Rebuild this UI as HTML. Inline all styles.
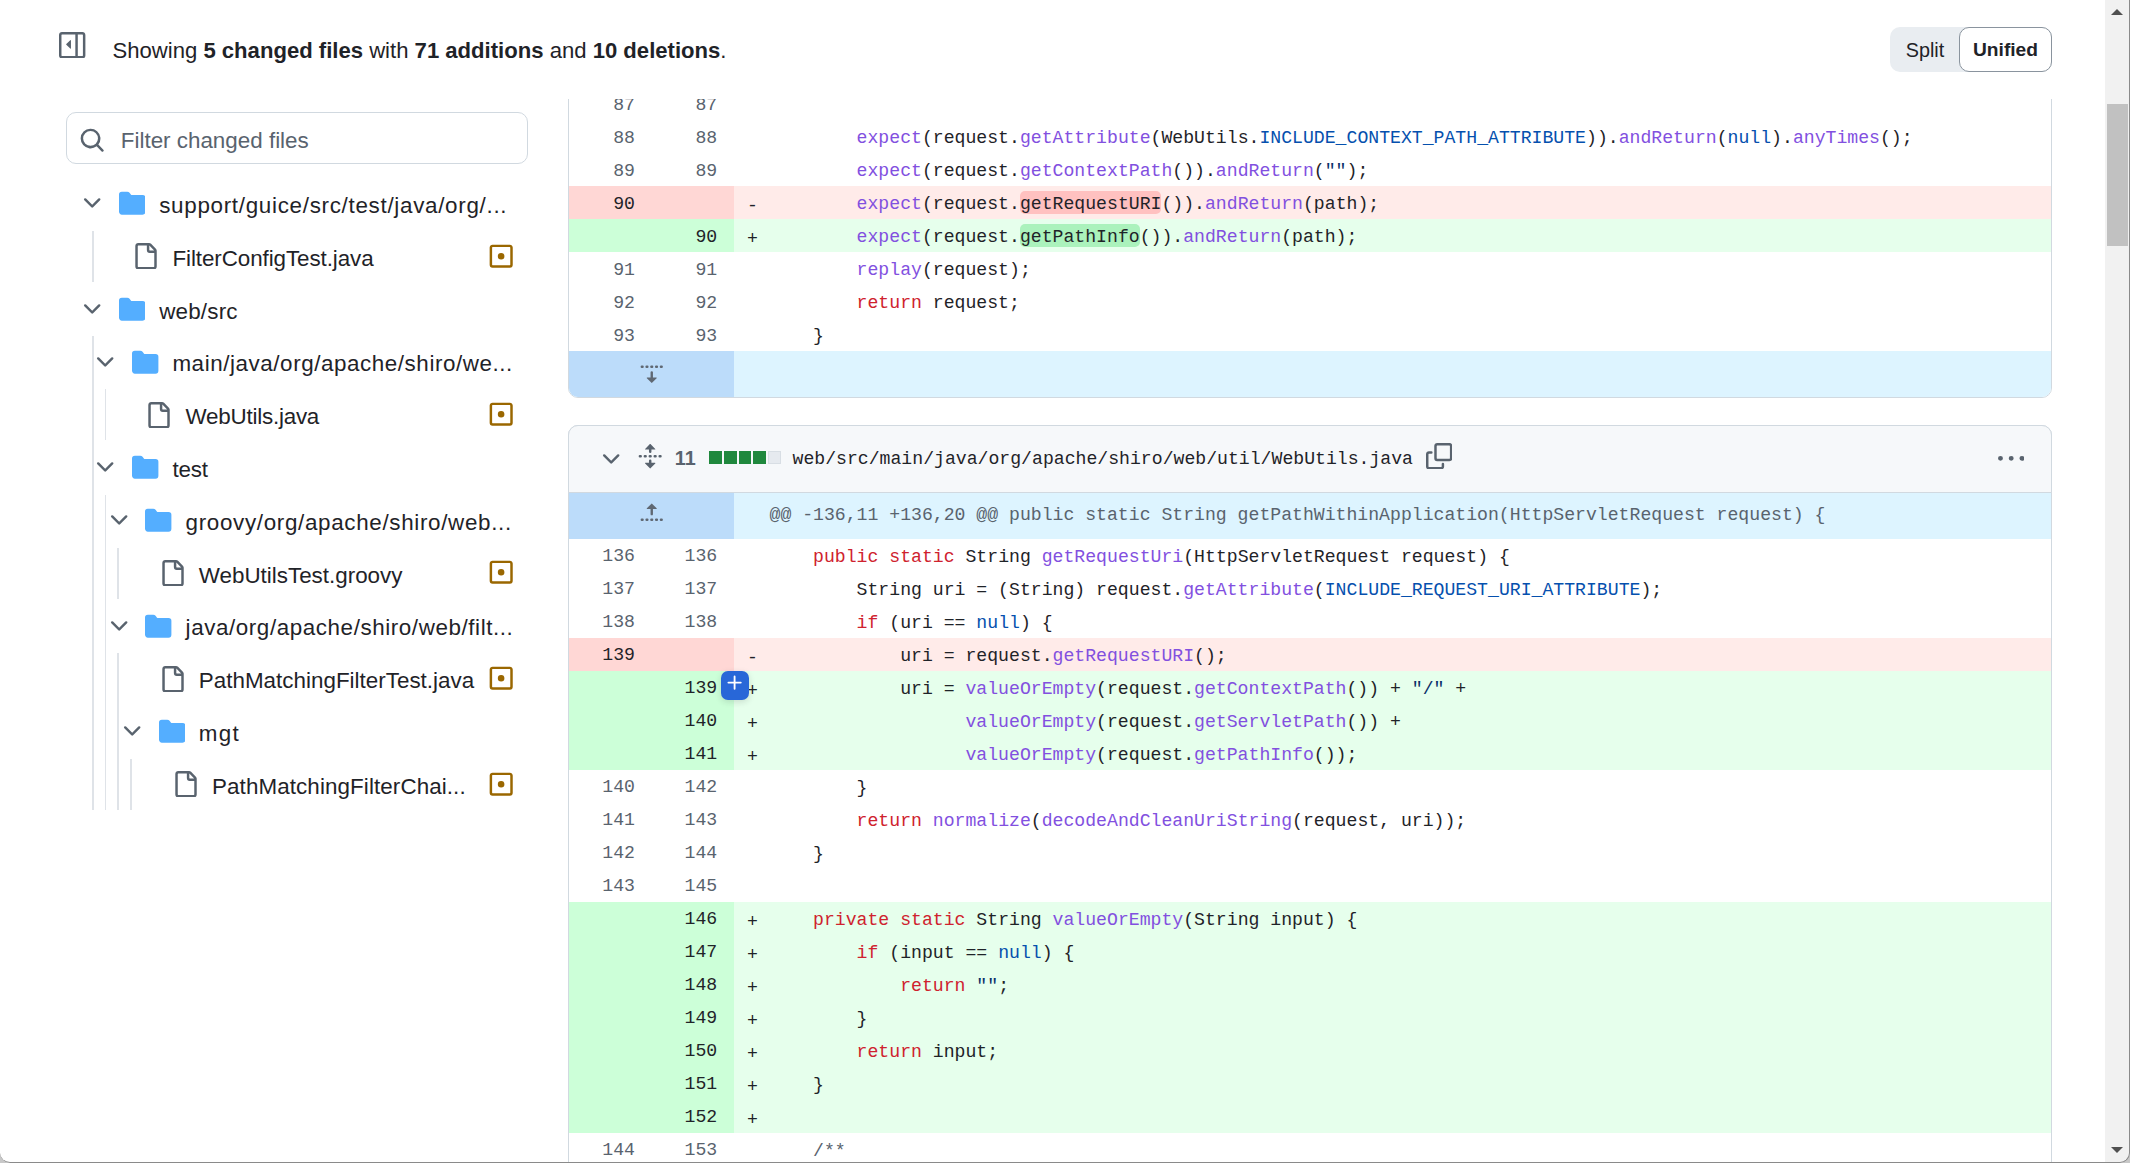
<!DOCTYPE html>
<html><head><meta charset="utf-8"><title>diff</title><style>
*{box-sizing:border-box;margin:0;padding:0}
html,body{width:2130px;height:1163px;overflow:hidden;background:#fff}
body{position:relative;font-family:"Liberation Sans", sans-serif;color:#1f2328}
.hdr{position:absolute;left:112.5px;top:35.4px;font-size:22.1px;line-height:32px;white-space:nowrap;color:#1f2328}
.hdr b{font-weight:700}
.tog{position:absolute;left:1890px;top:27px;width:162px;height:45px;background:#e9edf1;border-radius:10px}
.tog .sp{position:absolute;left:0;top:0;width:69px;height:45px;text-align:center;line-height:47px;font-size:19.8px;color:#1f2328;padding-left:1px}
.tog .un{position:absolute;left:69px;top:0;width:93px;height:45px;background:#fff;border:1.5px solid #8a949e;border-radius:10px;text-align:center;line-height:43.5px;font-size:19.2px;font-weight:700;color:#1f2328}
.search{position:absolute;left:66.3px;top:112.4px;width:461.3px;height:51.8px;border:1.5px solid #d1d9e0;border-radius:10px}
.ph{position:absolute;left:120.8px;top:124.5px;font-size:22.4px;line-height:32px;color:#59636e;white-space:nowrap}
.ti{position:absolute;font-size:22.4px;line-height:32px;white-space:nowrap;color:#1f2328}
.gl{position:absolute;width:1.6px;background:#dfe3e8}
.diff{position:absolute;left:0;top:99px;width:2105px;height:1064px;overflow:hidden}
.diffin{position:absolute;left:0;top:-99px;width:2105px;height:1163px}
.box{position:absolute;left:567.75px;width:1484.5px;border:1.5px solid #d1d9e0;border-radius:10px;overflow:hidden}
.box2{position:absolute;left:567.75px;width:1484.5px;height:900px;border:1.5px solid #d1d9e0;border-radius:10px}
.fh{position:absolute;left:567.75px;width:1484.5px;height:67.5px;background:#f6f8fa;border:1.5px solid #d1d9e0;border-radius:10px 10px 0 0}
.row{position:absolute;left:569.25px;width:1481.5px;height:33px;font-family:"Liberation Mono", monospace;font-size:18.15px;line-height:33px;white-space:pre}
.row .g{position:absolute;left:0;top:0;width:164.75px;height:33px}
.row .n1,.row .n2{position:absolute;top:1.6px;width:82.25px;text-align:right;padding-right:16.5px;color:#59636e}
.row .n1{left:0}.row .n2{left:82.25px}
.rd .n1,.rd .n2,.ra .n1,.ra .n2{color:#1f2328}
.rd{background:#ffebe9}.rd .g{background:#ffd7d5}
.ra{background:#e6ffec}.ra .g{background:#ccffd8}
.mk{position:absolute;left:177.75px;top:4px;color:#1f2328}
.code{position:absolute;left:200.25px;top:2.2px;color:#1f2328}
.hunk,.exp{position:absolute;left:569.25px;width:1481.5px;background:#ddf4ff}
.exp{border-radius:0 0 9px 9px;overflow:hidden}
.eg{position:absolute;left:0;top:0;width:164.75px;height:100%;background:#bcdcfa}
.hunk .hc{top:-1px;font-family:"Liberation Mono", monospace;font-size:18.15px;line-height:46px;white-space:pre;color:#59636e}
.k{color:#cf222e}.f{color:#8250df}.c{color:#0550ae}.s{color:#0a3069}.m{color:#59636e}
.wd{background:#ffc1c0;border-radius:5px;padding-top:3px;color:#1f2328}
.wa{background:#abf2bc;border-radius:5px;padding-top:3px;color:#1f2328}
.cnt{position:absolute;left:674.8px;top:442px;font-size:19.8px;line-height:32px;font-weight:700;color:#59636e}
.sq,.sq.gray{position:absolute;top:451px;width:12.9px;height:12.9px;background:#1f883d}
.sq.gray{background:#e6eaef;border:1px solid #d8dee4}
.fpath{position:absolute;left:792.5px;top:442.8px;font-family:"Liberation Mono", monospace;font-size:18.15px;line-height:33px;white-space:pre;color:#1f2328}
.pbtn{position:absolute;left:720.7px;top:671.3px;width:28.7px;height:29px;background:#2867d8;border-radius:7px;box-shadow:0 2px 6px rgba(31,35,40,.15)}
.sb{position:absolute;left:2105px;top:0;width:25px;height:1163px;background:#f1f1f1}
.thumb{position:absolute;left:2px;top:104px;width:21px;height:141.5px;background:#c1c1c1}
.frame{position:absolute;left:0;top:-20px;width:2130px;height:1183px;border-right:1.6px solid #8a8a8a;border-bottom:1.6px solid #8a8a8a;border-left:0;border-radius:0 0 10px 10px;box-shadow:0 0 0 30px #c8c8c8;pointer-events:none}
</style></head>
<body>
<svg style="position:absolute;left:59.30px;top:31.80px;" width="26.40" height="26.40" viewBox="0 0 16 16" fill="#59636e"><path d="M1.75 0h12.5C15.216 0 16 .784 16 1.75v12.5A1.75 1.75 0 0 1 14.25 16H1.75A1.75 1.75 0 0 1 0 14.25V1.75C0 .784.784 0 1.75 0ZM1.5 1.75v12.5c0 .138.112.25.25.25H9.9v-13H1.75a.25.25 0 0 0-.25.25ZM11.4 14.5h2.85a.25.25 0 0 0 .25-.25V1.75a.25.25 0 0 0-.25-.25H11.4ZM7.177 4.927a.25.25 0 0 1 .073.177v4.792a.25.25 0 0 1-.427.177L4.427 7.677a.25.25 0 0 1 0-.354l2.396-2.396a.25.25 0 0 1 .354 0Z"/></svg>
<div class="hdr">Showing <b>5 changed files</b> with <b>71 additions</b> and <b>10 deletions</b>.</div>
<div class="tog"><span class="sp">Split</span><span class="un">Unified</span></div>
<div class="search"></div>
<svg style="position:absolute;left:79.00px;top:127.10px;" width="26.40" height="26.40" viewBox="0 0 16 16" fill="#59636e"><path d="M10.68 11.74a6 6 0 0 1-7.922-8.982 6 6 0 0 1 8.982 7.922l3.04 3.04a.749.749 0 0 1-.326 1.275.749.749 0 0 1-.734-.215ZM11.5 7a4.499 4.499 0 1 0-8.997 0A4.499 4.499 0 0 0 11.5 7Z"/></svg>
<div class="ph">Filter changed files</div>
<svg style="position:absolute;left:79.20px;top:190.10px;" width="26.40" height="26.40" viewBox="0 0 16 16" fill="#59636e"><path d="M12.78 5.22a.749.749 0 0 1 0 1.06l-4.25 4.25a.749.749 0 0 1-1.06 0L3.22 6.28a.749.749 0 1 1 1.06-1.06L8 8.939l3.72-3.719a.749.749 0 0 1 1.06 0Z"/></svg>
<svg style="position:absolute;left:119.00px;top:190.30px;" width="26.40" height="26.40" viewBox="0 0 16 16" fill="#54aeff"><path d="M1.75 1A1.75 1.75 0 0 0 0 2.75v10.5C0 14.216.784 15 1.75 15h12.5A1.75 1.75 0 0 0 16 13.25v-8.5A1.75 1.75 0 0 0 14.25 3H7.5a.25.25 0 0 1-.2-.1l-.9-1.2C6.07 1.26 5.55 1 5 1H1.75Z"/></svg>
<div class="ti" style="left:159.20px;top:189.90px;letter-spacing:0.700px">support/guice/src/test/java/org/...</div>
<svg style="position:absolute;left:132.20px;top:243.10px;" width="26.40" height="26.40" viewBox="0 0 16 16" fill="#59636e"><path d="M2 1.75C2 .784 2.784 0 3.75 0h6.586c.464 0 .909.184 1.237.513l2.914 2.914c.329.328.513.773.513 1.237v9.586A1.75 1.75 0 0 1 13.25 16h-9.5A1.75 1.75 0 0 1 2 14.25Zm1.75-.25a.25.25 0 0 0-.25.25v12.5c0 .138.112.25.25.25h9.5a.25.25 0 0 0 .25-.25V6h-2.75A1.75 1.75 0 0 1 9 4.25V1.5Zm6.75.062V4.25c0 .138.112.25.25.25h2.688l-.011-.013-2.914-2.914-.013-.011Z"/></svg>
<svg style="position:absolute;left:487.60px;top:242.60px;" width="26.40" height="26.40" viewBox="0 0 16 16" fill="#9a6700"><path d="M13.25 1c.966 0 1.75.784 1.75 1.75v10.5A1.75 1.75 0 0 1 13.25 15H2.75A1.75 1.75 0 0 1 1 13.25V2.75C1 1.784 1.784 1 2.75 1ZM2.75 2.5a.25.25 0 0 0-.25.25v10.5c0 .138.112.25.25.25h10.5a.25.25 0 0 0 .25-.25V2.75a.25.25 0 0 0-.25-.25ZM8 10a2 2 0 1 1-.001-3.999A2 2 0 0 1 8 10Z"/></svg>
<div class="ti" style="left:172.40px;top:242.70px;letter-spacing:-0.080px">FilterConfigTest.java</div>
<svg style="position:absolute;left:79.20px;top:295.70px;" width="26.40" height="26.40" viewBox="0 0 16 16" fill="#59636e"><path d="M12.78 5.22a.749.749 0 0 1 0 1.06l-4.25 4.25a.749.749 0 0 1-1.06 0L3.22 6.28a.749.749 0 1 1 1.06-1.06L8 8.939l3.72-3.719a.749.749 0 0 1 1.06 0Z"/></svg>
<svg style="position:absolute;left:119.00px;top:295.90px;" width="26.40" height="26.40" viewBox="0 0 16 16" fill="#54aeff"><path d="M1.75 1A1.75 1.75 0 0 0 0 2.75v10.5C0 14.216.784 15 1.75 15h12.5A1.75 1.75 0 0 0 16 13.25v-8.5A1.75 1.75 0 0 0 14.25 3H7.5a.25.25 0 0 1-.2-.1l-.9-1.2C6.07 1.26 5.55 1 5 1H1.75Z"/></svg>
<div class="ti" style="left:159.20px;top:295.50px;letter-spacing:0.200px">web/src</div>
<svg style="position:absolute;left:92.40px;top:348.50px;" width="26.40" height="26.40" viewBox="0 0 16 16" fill="#59636e"><path d="M12.78 5.22a.749.749 0 0 1 0 1.06l-4.25 4.25a.749.749 0 0 1-1.06 0L3.22 6.28a.749.749 0 1 1 1.06-1.06L8 8.939l3.72-3.719a.749.749 0 0 1 1.06 0Z"/></svg>
<svg style="position:absolute;left:132.20px;top:348.70px;" width="26.40" height="26.40" viewBox="0 0 16 16" fill="#54aeff"><path d="M1.75 1A1.75 1.75 0 0 0 0 2.75v10.5C0 14.216.784 15 1.75 15h12.5A1.75 1.75 0 0 0 16 13.25v-8.5A1.75 1.75 0 0 0 14.25 3H7.5a.25.25 0 0 1-.2-.1l-.9-1.2C6.07 1.26 5.55 1 5 1H1.75Z"/></svg>
<div class="ti" style="left:172.40px;top:348.30px;letter-spacing:0.567px">main/java/org/apache/shiro/we...</div>
<svg style="position:absolute;left:145.40px;top:401.50px;" width="26.40" height="26.40" viewBox="0 0 16 16" fill="#59636e"><path d="M2 1.75C2 .784 2.784 0 3.75 0h6.586c.464 0 .909.184 1.237.513l2.914 2.914c.329.328.513.773.513 1.237v9.586A1.75 1.75 0 0 1 13.25 16h-9.5A1.75 1.75 0 0 1 2 14.25Zm1.75-.25a.25.25 0 0 0-.25.25v12.5c0 .138.112.25.25.25h9.5a.25.25 0 0 0 .25-.25V6h-2.75A1.75 1.75 0 0 1 9 4.25V1.5Zm6.75.062V4.25c0 .138.112.25.25.25h2.688l-.011-.013-2.914-2.914-.013-.011Z"/></svg>
<svg style="position:absolute;left:487.60px;top:401.00px;" width="26.40" height="26.40" viewBox="0 0 16 16" fill="#9a6700"><path d="M13.25 1c.966 0 1.75.784 1.75 1.75v10.5A1.75 1.75 0 0 1 13.25 15H2.75A1.75 1.75 0 0 1 1 13.25V2.75C1 1.784 1.784 1 2.75 1ZM2.75 2.5a.25.25 0 0 0-.25.25v10.5c0 .138.112.25.25.25h10.5a.25.25 0 0 0 .25-.25V2.75a.25.25 0 0 0-.25-.25ZM8 10a2 2 0 1 1-.001-3.999A2 2 0 0 1 8 10Z"/></svg>
<div class="ti" style="left:185.60px;top:401.10px;letter-spacing:-0.230px">WebUtils.java</div>
<svg style="position:absolute;left:92.40px;top:454.10px;" width="26.40" height="26.40" viewBox="0 0 16 16" fill="#59636e"><path d="M12.78 5.22a.749.749 0 0 1 0 1.06l-4.25 4.25a.749.749 0 0 1-1.06 0L3.22 6.28a.749.749 0 1 1 1.06-1.06L8 8.939l3.72-3.719a.749.749 0 0 1 1.06 0Z"/></svg>
<svg style="position:absolute;left:132.20px;top:454.30px;" width="26.40" height="26.40" viewBox="0 0 16 16" fill="#54aeff"><path d="M1.75 1A1.75 1.75 0 0 0 0 2.75v10.5C0 14.216.784 15 1.75 15h12.5A1.75 1.75 0 0 0 16 13.25v-8.5A1.75 1.75 0 0 0 14.25 3H7.5a.25.25 0 0 1-.2-.1l-.9-1.2C6.07 1.26 5.55 1 5 1H1.75Z"/></svg>
<div class="ti" style="left:172.40px;top:453.90px;letter-spacing:-0.150px">test</div>
<svg style="position:absolute;left:105.60px;top:506.90px;" width="26.40" height="26.40" viewBox="0 0 16 16" fill="#59636e"><path d="M12.78 5.22a.749.749 0 0 1 0 1.06l-4.25 4.25a.749.749 0 0 1-1.06 0L3.22 6.28a.749.749 0 1 1 1.06-1.06L8 8.939l3.72-3.719a.749.749 0 0 1 1.06 0Z"/></svg>
<svg style="position:absolute;left:145.40px;top:507.10px;" width="26.40" height="26.40" viewBox="0 0 16 16" fill="#54aeff"><path d="M1.75 1A1.75 1.75 0 0 0 0 2.75v10.5C0 14.216.784 15 1.75 15h12.5A1.75 1.75 0 0 0 16 13.25v-8.5A1.75 1.75 0 0 0 14.25 3H7.5a.25.25 0 0 1-.2-.1l-.9-1.2C6.07 1.26 5.55 1 5 1H1.75Z"/></svg>
<div class="ti" style="left:185.60px;top:506.70px;letter-spacing:0.670px">groovy/org/apache/shiro/web...</div>
<svg style="position:absolute;left:158.60px;top:559.90px;" width="26.40" height="26.40" viewBox="0 0 16 16" fill="#59636e"><path d="M2 1.75C2 .784 2.784 0 3.75 0h6.586c.464 0 .909.184 1.237.513l2.914 2.914c.329.328.513.773.513 1.237v9.586A1.75 1.75 0 0 1 13.25 16h-9.5A1.75 1.75 0 0 1 2 14.25Zm1.75-.25a.25.25 0 0 0-.25.25v12.5c0 .138.112.25.25.25h9.5a.25.25 0 0 0 .25-.25V6h-2.75A1.75 1.75 0 0 1 9 4.25V1.5Zm6.75.062V4.25c0 .138.112.25.25.25h2.688l-.011-.013-2.914-2.914-.013-.011Z"/></svg>
<svg style="position:absolute;left:487.60px;top:559.40px;" width="26.40" height="26.40" viewBox="0 0 16 16" fill="#9a6700"><path d="M13.25 1c.966 0 1.75.784 1.75 1.75v10.5A1.75 1.75 0 0 1 13.25 15H2.75A1.75 1.75 0 0 1 1 13.25V2.75C1 1.784 1.784 1 2.75 1ZM2.75 2.5a.25.25 0 0 0-.25.25v10.5c0 .138.112.25.25.25h10.5a.25.25 0 0 0 .25-.25V2.75a.25.25 0 0 0-.25-.25ZM8 10a2 2 0 1 1-.001-3.999A2 2 0 0 1 8 10Z"/></svg>
<div class="ti" style="left:198.80px;top:559.50px;letter-spacing:0.000px">WebUtilsTest.groovy</div>
<svg style="position:absolute;left:105.60px;top:612.50px;" width="26.40" height="26.40" viewBox="0 0 16 16" fill="#59636e"><path d="M12.78 5.22a.749.749 0 0 1 0 1.06l-4.25 4.25a.749.749 0 0 1-1.06 0L3.22 6.28a.749.749 0 1 1 1.06-1.06L8 8.939l3.72-3.719a.749.749 0 0 1 1.06 0Z"/></svg>
<svg style="position:absolute;left:145.40px;top:612.70px;" width="26.40" height="26.40" viewBox="0 0 16 16" fill="#54aeff"><path d="M1.75 1A1.75 1.75 0 0 0 0 2.75v10.5C0 14.216.784 15 1.75 15h12.5A1.75 1.75 0 0 0 16 13.25v-8.5A1.75 1.75 0 0 0 14.25 3H7.5a.25.25 0 0 1-.2-.1l-.9-1.2C6.07 1.26 5.55 1 5 1H1.75Z"/></svg>
<div class="ti" style="left:185.60px;top:612.30px;letter-spacing:0.580px">java/org/apache/shiro/web/filt...</div>
<svg style="position:absolute;left:158.60px;top:665.50px;" width="26.40" height="26.40" viewBox="0 0 16 16" fill="#59636e"><path d="M2 1.75C2 .784 2.784 0 3.75 0h6.586c.464 0 .909.184 1.237.513l2.914 2.914c.329.328.513.773.513 1.237v9.586A1.75 1.75 0 0 1 13.25 16h-9.5A1.75 1.75 0 0 1 2 14.25Zm1.75-.25a.25.25 0 0 0-.25.25v12.5c0 .138.112.25.25.25h9.5a.25.25 0 0 0 .25-.25V6h-2.75A1.75 1.75 0 0 1 9 4.25V1.5Zm6.75.062V4.25c0 .138.112.25.25.25h2.688l-.011-.013-2.914-2.914-.013-.011Z"/></svg>
<svg style="position:absolute;left:487.60px;top:665.00px;" width="26.40" height="26.40" viewBox="0 0 16 16" fill="#9a6700"><path d="M13.25 1c.966 0 1.75.784 1.75 1.75v10.5A1.75 1.75 0 0 1 13.25 15H2.75A1.75 1.75 0 0 1 1 13.25V2.75C1 1.784 1.784 1 2.75 1ZM2.75 2.5a.25.25 0 0 0-.25.25v10.5c0 .138.112.25.25.25h10.5a.25.25 0 0 0 .25-.25V2.75a.25.25 0 0 0-.25-.25ZM8 10a2 2 0 1 1-.001-3.999A2 2 0 0 1 8 10Z"/></svg>
<div class="ti" style="left:198.80px;top:665.10px;letter-spacing:0.015px">PathMatchingFilterTest.java</div>
<svg style="position:absolute;left:118.80px;top:718.10px;" width="26.40" height="26.40" viewBox="0 0 16 16" fill="#59636e"><path d="M12.78 5.22a.749.749 0 0 1 0 1.06l-4.25 4.25a.749.749 0 0 1-1.06 0L3.22 6.28a.749.749 0 1 1 1.06-1.06L8 8.939l3.72-3.719a.749.749 0 0 1 1.06 0Z"/></svg>
<svg style="position:absolute;left:158.60px;top:718.30px;" width="26.40" height="26.40" viewBox="0 0 16 16" fill="#54aeff"><path d="M1.75 1A1.75 1.75 0 0 0 0 2.75v10.5C0 14.216.784 15 1.75 15h12.5A1.75 1.75 0 0 0 16 13.25v-8.5A1.75 1.75 0 0 0 14.25 3H7.5a.25.25 0 0 1-.2-.1l-.9-1.2C6.07 1.26 5.55 1 5 1H1.75Z"/></svg>
<div class="ti" style="left:198.80px;top:717.90px;letter-spacing:1.300px">mgt</div>
<svg style="position:absolute;left:171.80px;top:771.10px;" width="26.40" height="26.40" viewBox="0 0 16 16" fill="#59636e"><path d="M2 1.75C2 .784 2.784 0 3.75 0h6.586c.464 0 .909.184 1.237.513l2.914 2.914c.329.328.513.773.513 1.237v9.586A1.75 1.75 0 0 1 13.25 16h-9.5A1.75 1.75 0 0 1 2 14.25Zm1.75-.25a.25.25 0 0 0-.25.25v12.5c0 .138.112.25.25.25h9.5a.25.25 0 0 0 .25-.25V6h-2.75A1.75 1.75 0 0 1 9 4.25V1.5Zm6.75.062V4.25c0 .138.112.25.25.25h2.688l-.011-.013-2.914-2.914-.013-.011Z"/></svg>
<svg style="position:absolute;left:487.60px;top:770.60px;" width="26.40" height="26.40" viewBox="0 0 16 16" fill="#9a6700"><path d="M13.25 1c.966 0 1.75.784 1.75 1.75v10.5A1.75 1.75 0 0 1 13.25 15H2.75A1.75 1.75 0 0 1 1 13.25V2.75C1 1.784 1.784 1 2.75 1ZM2.75 2.5a.25.25 0 0 0-.25.25v10.5c0 .138.112.25.25.25h10.5a.25.25 0 0 0 .25-.25V2.75a.25.25 0 0 0-.25-.25ZM8 10a2 2 0 1 1-.001-3.999A2 2 0 0 1 8 10Z"/></svg>
<div class="ti" style="left:212.00px;top:770.70px;letter-spacing:0.095px">PathMatchingFilterChai...</div>
<div class="gl" style="left:92.20px;top:230.70px;height:51.30px"></div>
<div class="gl" style="left:92.20px;top:336.30px;height:473.70px"></div>
<div class="gl" style="left:104.60px;top:389.10px;height:51.30px"></div>
<div class="gl" style="left:104.60px;top:494.70px;height:315.30px"></div>
<div class="gl" style="left:117.40px;top:547.50px;height:51.30px"></div>
<div class="gl" style="left:117.40px;top:653.10px;height:156.90px"></div>
<div class="gl" style="left:130.20px;top:758.70px;height:51.30px"></div>
<div class="diff"><div class="diffin">
<div class="box" style="top:-100px;height:497.90px"></div>
<div class="row rc" style="top:87.00px"><div class="g"><span class="n1">87</span><span class="n2">87</span></div><span class="mk"></span><span class="code"></span></div>
<div class="row rc" style="top:120.00px"><div class="g"><span class="n1">88</span><span class="n2">88</span></div><span class="mk"></span><span class="code">        <span class="f">expect</span>(request.<span class="f">getAttribute</span>(WebUtils.<span class="c">INCLUDE_CONTEXT_PATH_ATTRIBUTE</span>)).<span class="f">andReturn</span>(<span class="c">null</span>).<span class="f">anyTimes</span>();</span></div>
<div class="row rc" style="top:153.00px"><div class="g"><span class="n1">89</span><span class="n2">89</span></div><span class="mk"></span><span class="code">        <span class="f">expect</span>(request.<span class="f">getContextPath</span>()).<span class="f">andReturn</span>(<span class="s">""</span>);</span></div>
<div class="row rd" style="top:186.00px"><div class="g"><span class="n1">90</span><span class="n2"></span></div><span class="mk">-</span><span class="code">        <span class="f">expect</span>(request.<span class="wd">getRequestURI</span>()).<span class="f">andReturn</span>(path);</span></div>
<div class="row ra" style="top:219.00px"><div class="g"><span class="n1"></span><span class="n2">90</span></div><span class="mk">+</span><span class="code">        <span class="f">expect</span>(request.<span class="wa">getPathInfo</span>()).<span class="f">andReturn</span>(path);</span></div>
<div class="row rc" style="top:252.00px"><div class="g"><span class="n1">91</span><span class="n2">91</span></div><span class="mk"></span><span class="code">        <span class="f">replay</span>(request);</span></div>
<div class="row rc" style="top:285.00px"><div class="g"><span class="n1">92</span><span class="n2">92</span></div><span class="mk"></span><span class="code">        <span class="k">return</span> request;</span></div>
<div class="row rc" style="top:318.00px"><div class="g"><span class="n1">93</span><span class="n2">93</span></div><span class="mk"></span><span class="code">    }</span></div>
<div class="exp" style="top:351.00px;height:45.6px"><div class="eg"></div></div>
<svg style="position:absolute;left:639.05px;top:359.90px;" width="25.50" height="25.50" viewBox="0 0 16 16" fill="#5f6873"><path d="m8.177 14.323 2.896-2.896a.25.25 0 0 0-.177-.427H8.75V7.764a.75.75 0 1 0-1.5 0V11H5.104a.25.25 0 0 0-.177.427l2.896 2.896a.25.25 0 0 0 .354 0ZM2.25 5a.75.75 0 0 0 0-1.5h-.5a.75.75 0 0 0 0 1.5h.5ZM6 4.25a.75.75 0 0 1-.75.75h-.5a.75.75 0 0 1 0-1.5h.5a.75.75 0 0 1 .75.75ZM8.25 5a.75.75 0 0 0 0-1.5h-.5a.75.75 0 0 0 0 1.5h.5ZM12 4.25a.75.75 0 0 1-.75.75h-.5a.75.75 0 0 1 0-1.5h.5a.75.75 0 0 1 .75.75Zm2.25.75a.75.75 0 0 0 0-1.5h-.5a.75.75 0 0 0 0 1.5h.5Z"/></svg>
<div class="box2" style="top:425px"></div>
<div class="fh" style="top:425px"></div>
<div class="hunk" style="top:492.5px;height:46.2px"><div class="eg"></div><span class="code hc">@@ -136,11 +136,20 @@ public static String getPathWithinApplication(HttpServletRequest request) {</span></div>
<svg style="position:absolute;left:638.95px;top:501.00px;" width="25.50" height="25.50" viewBox="0 0 16 16" fill="#5f6873"><path d="M7.823 1.677 4.927 4.573A.25.25 0 0 0 5.104 5H7.25v3.236a.75.75 0 1 0 1.5 0V5h2.146a.25.25 0 0 0 .177-.427L8.177 1.677a.25.25 0 0 0-.354 0ZM13.75 11a.75.75 0 0 0 0 1.5h.5a.75.75 0 0 0 0-1.5h-.5Zm-3.75.75a.75.75 0 0 1 .75-.75h.5a.75.75 0 0 1 0 1.5h-.5a.75.75 0 0 1-.75-.75ZM7.75 11a.75.75 0 0 0 0 1.5h.5a.75.75 0 0 0 0-1.5h-.5ZM4 11.75a.75.75 0 0 1 .75-.75h.5a.75.75 0 0 1 0 1.5h-.5a.75.75 0 0 1-.75-.75ZM1.75 11a.75.75 0 0 0 0 1.5h.5a.75.75 0 0 0 0-1.5h-.5Z"/></svg>
<div class="row rc" style="top:538.70px"><div class="g"><span class="n1">136</span><span class="n2">136</span></div><span class="mk"></span><span class="code">    <span class="k">public</span> <span class="k">static</span> String <span class="f">getRequestUri</span>(HttpServletRequest request) {</span></div>
<div class="row rc" style="top:571.70px"><div class="g"><span class="n1">137</span><span class="n2">137</span></div><span class="mk"></span><span class="code">        String uri = (String) request.<span class="f">getAttribute</span>(<span class="c">INCLUDE_REQUEST_URI_ATTRIBUTE</span>);</span></div>
<div class="row rc" style="top:604.70px"><div class="g"><span class="n1">138</span><span class="n2">138</span></div><span class="mk"></span><span class="code">        <span class="k">if</span> (uri == <span class="c">null</span>) {</span></div>
<div class="row rd" style="top:637.70px"><div class="g"><span class="n1">139</span><span class="n2"></span></div><span class="mk">-</span><span class="code">            uri = request.<span class="f">getRequestURI</span>();</span></div>
<div class="row ra" style="top:670.70px"><div class="g"><span class="n1"></span><span class="n2">139</span></div><span class="mk">+</span><span class="code">            uri = <span class="f">valueOrEmpty</span>(request.<span class="f">getContextPath</span>()) + <span class="s">"/"</span> +</span></div>
<div class="row ra" style="top:703.70px"><div class="g"><span class="n1"></span><span class="n2">140</span></div><span class="mk">+</span><span class="code">                  <span class="f">valueOrEmpty</span>(request.<span class="f">getServletPath</span>()) +</span></div>
<div class="row ra" style="top:736.70px"><div class="g"><span class="n1"></span><span class="n2">141</span></div><span class="mk">+</span><span class="code">                  <span class="f">valueOrEmpty</span>(request.<span class="f">getPathInfo</span>());</span></div>
<div class="row rc" style="top:769.70px"><div class="g"><span class="n1">140</span><span class="n2">142</span></div><span class="mk"></span><span class="code">        }</span></div>
<div class="row rc" style="top:802.70px"><div class="g"><span class="n1">141</span><span class="n2">143</span></div><span class="mk"></span><span class="code">        <span class="k">return</span> <span class="f">normalize</span>(<span class="f">decodeAndCleanUriString</span>(request, uri));</span></div>
<div class="row rc" style="top:835.70px"><div class="g"><span class="n1">142</span><span class="n2">144</span></div><span class="mk"></span><span class="code">    }</span></div>
<div class="row rc" style="top:868.70px"><div class="g"><span class="n1">143</span><span class="n2">145</span></div><span class="mk"></span><span class="code"></span></div>
<div class="row ra" style="top:901.70px"><div class="g"><span class="n1"></span><span class="n2">146</span></div><span class="mk">+</span><span class="code">    <span class="k">private</span> <span class="k">static</span> String <span class="f">valueOrEmpty</span>(String input) {</span></div>
<div class="row ra" style="top:934.70px"><div class="g"><span class="n1"></span><span class="n2">147</span></div><span class="mk">+</span><span class="code">        <span class="k">if</span> (input == <span class="c">null</span>) {</span></div>
<div class="row ra" style="top:967.70px"><div class="g"><span class="n1"></span><span class="n2">148</span></div><span class="mk">+</span><span class="code">            <span class="k">return</span> <span class="s">""</span>;</span></div>
<div class="row ra" style="top:1000.70px"><div class="g"><span class="n1"></span><span class="n2">149</span></div><span class="mk">+</span><span class="code">        }</span></div>
<div class="row ra" style="top:1033.70px"><div class="g"><span class="n1"></span><span class="n2">150</span></div><span class="mk">+</span><span class="code">        <span class="k">return</span> input;</span></div>
<div class="row ra" style="top:1066.70px"><div class="g"><span class="n1"></span><span class="n2">151</span></div><span class="mk">+</span><span class="code">    }</span></div>
<div class="row ra" style="top:1099.70px"><div class="g"><span class="n1"></span><span class="n2">152</span></div><span class="mk">+</span><span class="code"></span></div>
<div class="row rc" style="top:1132.70px"><div class="g"><span class="n1">144</span><span class="n2">153</span></div><span class="mk"></span><span class="code"><span class="m">    /**</span></span></div>
<svg style="position:absolute;left:597.70px;top:445.80px;" width="26.40" height="26.40" viewBox="0 0 16 16" fill="#59636e"><path d="M12.78 5.22a.749.749 0 0 1 0 1.06l-4.25 4.25a.749.749 0 0 1-1.06 0L3.22 6.28a.749.749 0 1 1 1.06-1.06L8 8.939l3.72-3.719a.749.749 0 0 1 1.06 0Z"/></svg>
<svg style="position:absolute;left:637.20px;top:442.90px;" width="26.40" height="26.40" viewBox="0 0 16 16" fill="#59636e"><path d="m8.177.677 2.896 2.896a.25.25 0 0 1-.177.427H8.75v1.25a.75.75 0 0 1-1.5 0V4H5.104a.25.25 0 0 1-.177-.427L7.823.677a.25.25 0 0 1 .354 0ZM7.25 10.75a.75.75 0 0 1 1.5 0V12h2.146a.25.25 0 0 1 .177.427l-2.896 2.896a.25.25 0 0 1-.354 0l-2.896-2.896A.25.25 0 0 1 5.104 12H7.25v-1.25Zm-5-2a.75.75 0 0 0 0-1.5h-.5a.75.75 0 0 0 0 1.5h.5ZM6 8a.75.75 0 0 1-.75.75h-.5a.75.75 0 0 1 0-1.5h.5A.75.75 0 0 1 6 8Zm2.25.75a.75.75 0 0 0 0-1.5h-.5a.75.75 0 0 0 0 1.5h.5ZM12 8a.75.75 0 0 1-.75.75h-.5a.75.75 0 0 1 0-1.5h.5A.75.75 0 0 1 12 8Zm2.25.75a.75.75 0 0 0 0-1.5h-.5a.75.75 0 0 0 0 1.5h.5Z"/></svg>
<div class="cnt">11</div>
<div class="sq" style="left:709.00px"></div>
<div class="sq" style="left:723.80px"></div>
<div class="sq" style="left:738.60px"></div>
<div class="sq" style="left:753.40px"></div>
<div class="sq gray" style="left:768.20px"></div>
<div class="fpath">web/src/main/java/org/apache/shiro/web/util/WebUtils.java</div>
<svg style="position:absolute;left:1426.00px;top:443.00px;" width="26.40" height="26.40" viewBox="0 0 16 16" fill="#59636e"><path d="M0 6.75C0 5.784.784 5 1.75 5h1.5a.75.75 0 0 1 0 1.5h-1.5a.25.25 0 0 0-.25.25v7.5c0 .138.112.25.25.25h7.5a.25.25 0 0 0 .25-.25v-1.5a.75.75 0 0 1 1.5 0v1.5A1.75 1.75 0 0 1 9.25 16h-7.5A1.75 1.75 0 0 1 0 14.25ZM5 1.75C5 .784 5.784 0 6.75 0h7.5C15.216 0 16 .784 16 1.75v7.5A1.75 1.75 0 0 1 14.25 11h-7.5A1.75 1.75 0 0 1 5 9.25Zm1.75-.25a.25.25 0 0 0-.25.25v7.5c0 .138.112.25.25.25h7.5a.25.25 0 0 0 .25-.25v-7.5a.25.25 0 0 0-.25-.25Z"/></svg>
<svg style="position:absolute;left:1998.00px;top:445.80px;" width="26.40" height="26.40" viewBox="0 0 16 16" fill="#59636e"><path d="M8 9a1.5 1.5 0 1 0 0-3 1.5 1.5 0 0 0 0 3ZM1.5 9a1.5 1.5 0 1 0 0-3 1.5 1.5 0 0 0 0 3Zm13 0a1.5 1.5 0 1 0 0-3 1.5 1.5 0 0 0 0 3Z"/></svg>
<div class="pbtn"><svg width="19.8" height="19.8" viewBox="0 0 16 16" fill="#fff" style="position:absolute;left:4.5px;top:2.0px"><path d="M7.75 2a.75.75 0 0 1 .75.75V7h4.25a.75.75 0 0 1 0 1.5H8.5v4.25a.75.75 0 0 1-1.5 0V8.5H2.75a.75.75 0 0 1 0-1.5H7V2.75A.75.75 0 0 1 7.75 2Z"/></svg></div>
</div></div>
<div class="sb"><div class="thumb"></div>
<svg style="position:absolute;left:6px;top:8px" width="12" height="8" viewBox="0 0 12 8"><path d="M0 7 L6 1 L12 7Z" fill="#505050"/></svg>
<svg style="position:absolute;left:6px;top:1146px" width="12" height="8" viewBox="0 0 12 8"><path d="M0 1 L6 7 L12 1Z" fill="#505050"/></svg>
</div>
<div class="frame"></div>
</body></html>
